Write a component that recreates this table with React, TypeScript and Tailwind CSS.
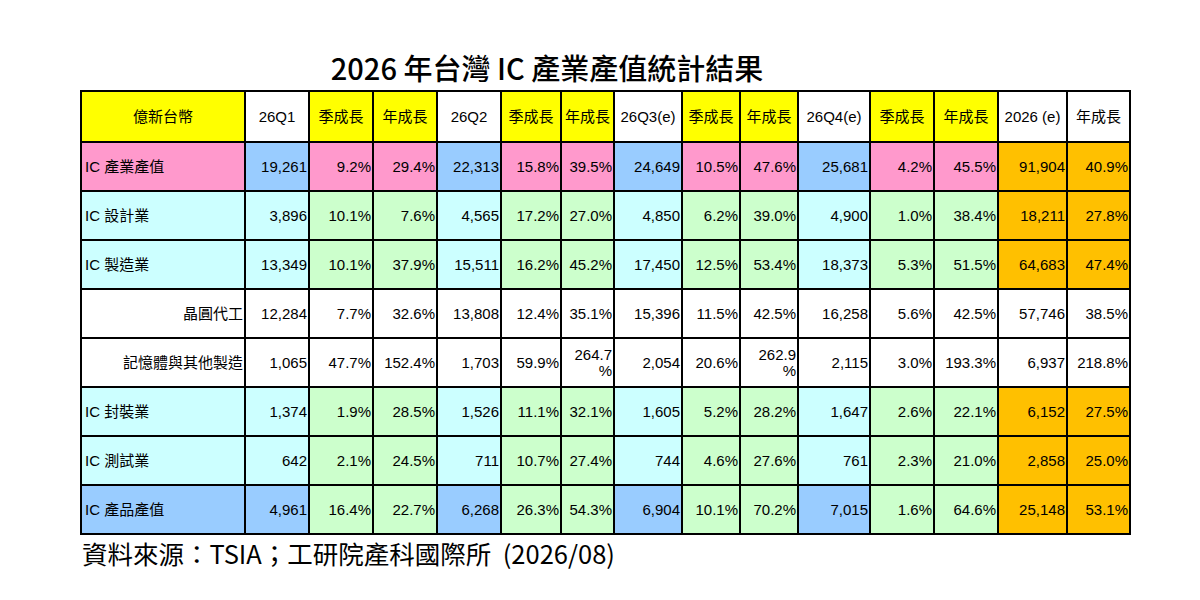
import React from 'react';

type Tone = 'pink' | 'cyan' | 'white' | 'blue';

interface DataRow {
  label: string;
  tone: Tone;
  indent?: boolean;
  values: string[];
}

const HEADERS = [
  '億新台幣', '26Q1', '季成長', '年成長', '26Q2', '季成長', '年成長',
  '26Q3(e)', '季成長', '年成長', '26Q4(e)', '季成長', '年成長', '2026 (e)', '年成長',
];

// header cells that are yellow (the rest are white)
const YELLOW_HEAD = new Set([0, 2, 3, 5, 6, 8, 9, 11, 12]);
const VALUE_COLS = new Set([0, 3, 6, 9]);

const ROWS: DataRow[] = [
  {
    label: 'IC 產業產值',
    tone: 'pink',
    values: ['19,261', '9.2%', '29.4%', '22,313', '15.8%', '39.5%', '24,649', '10.5%', '47.6%', '25,681', '4.2%', '45.5%', '91,904', '40.9%'],
  },
  {
    label: 'IC 設計業',
    tone: 'cyan',
    values: ['3,896', '10.1%', '7.6%', '4,565', '17.2%', '27.0%', '4,850', '6.2%', '39.0%', '4,900', '1.0%', '38.4%', '18,211', '27.8%'],
  },
  {
    label: 'IC 製造業',
    tone: 'cyan',
    values: ['13,349', '10.1%', '37.9%', '15,511', '16.2%', '45.2%', '17,450', '12.5%', '53.4%', '18,373', '5.3%', '51.5%', '64,683', '47.4%'],
  },
  {
    label: '晶圓代工',
    tone: 'white',
    indent: true,
    values: ['12,284', '7.7%', '32.6%', '13,808', '12.4%', '35.1%', '15,396', '11.5%', '42.5%', '16,258', '5.6%', '42.5%', '57,746', '38.5%'],
  },
  {
    label: '記憶體與其他製造',
    tone: 'white',
    indent: true,
    values: ['1,065', '47.7%', '152.4%', '1,703', '59.9%', '264.7\n%', '2,054', '20.6%', '262.9\n%', '2,115', '3.0%', '193.3%', '6,937', '218.8%'],
  },
  {
    label: 'IC 封裝業',
    tone: 'cyan',
    values: ['1,374', '1.9%', '28.5%', '1,526', '11.1%', '32.1%', '1,605', '5.2%', '28.2%', '1,647', '2.6%', '22.1%', '6,152', '27.5%'],
  },
  {
    label: 'IC 測試業',
    tone: 'cyan',
    values: ['642', '2.1%', '24.5%', '711', '10.7%', '27.4%', '744', '4.6%', '27.6%', '761', '2.3%', '21.0%', '2,858', '25.0%'],
  },
  {
    label: 'IC 產品產值',
    tone: 'blue',
    values: ['4,961', '16.4%', '22.7%', '6,268', '26.3%', '54.3%', '6,904', '10.1%', '70.2%', '7,015', '1.6%', '64.6%', '25,148', '53.1%'],
  },
];

const BG = {
  yellow: 'bg-[#ffff00]',
  white: 'bg-white',
  pink: 'bg-[#ff99cc]',
  blue: 'bg-[#99ccff]',
  cyan: 'bg-[#ccffff]',
  green: 'bg-[#ccffcc]',
  orange: 'bg-[#ffc000]',
};

function cellBg(tone: Tone, i: number) {
  if (tone === 'white') return BG.white;
  if (i >= 12) return BG.orange;
  if (VALUE_COLS.has(i)) return tone === 'cyan' ? BG.cyan : BG.blue;
  return tone === 'pink' ? BG.pink : BG.green;
}

export default function App() {
  return (
    <div className="w-[1200px] h-[600px] bg-white text-black overflow-hidden">
      <h1 className="w-[1094px] pt-[47px] h-[90px] text-center text-[29px] leading-[40px] font-medium font-['Noto_Sans_CJK_TC',sans-serif]">
        2026 年台灣 IC 產業產值統計結果
      </h1>

      <div className="ml-[80px] w-fit grid grid-cols-[162px_62px_62px_62px_62px_58px_51px_66px_56px_56px_70px_62px_62px_67px_61px] grid-rows-[49px_repeat(8,47px)] gap-[2px] p-[2px] bg-black font-['Liberation_Sans','Noto_Sans_CJK_TC',sans-serif] text-[15px] leading-[16px]">
        {HEADERS.map((h, i) => (
          <div
            key={`h${i}`}
            className={`flex items-center justify-center whitespace-nowrap ${YELLOW_HEAD.has(i) ? BG.yellow : BG.white}`}
          >
            {h}
          </div>
        ))}

        {ROWS.map((row) => (
          <React.Fragment key={row.label}>
            <div
              className={`flex items-center whitespace-nowrap ${row.indent ? 'justify-end pr-[1px]' : 'pl-[3px]'} ${BG[row.tone]}`}
            >
              {row.label}
            </div>
            {row.values.map((v, i) => (
              <div
                key={i}
                className={`flex items-center justify-end pr-[1px] text-right whitespace-pre ${cellBg(row.tone, i)}`}
              >
                {v}
              </div>
            ))}
          </React.Fragment>
        ))}
      </div>

      <p className="pl-[82px] text-[25.5px] leading-[36px] font-['Noto_Sans_CJK_TC',sans-serif] whitespace-pre">
        資料來源：TSIA；工研院產科國際所  (2026/08)
      </p>
    </div>
  );
}
